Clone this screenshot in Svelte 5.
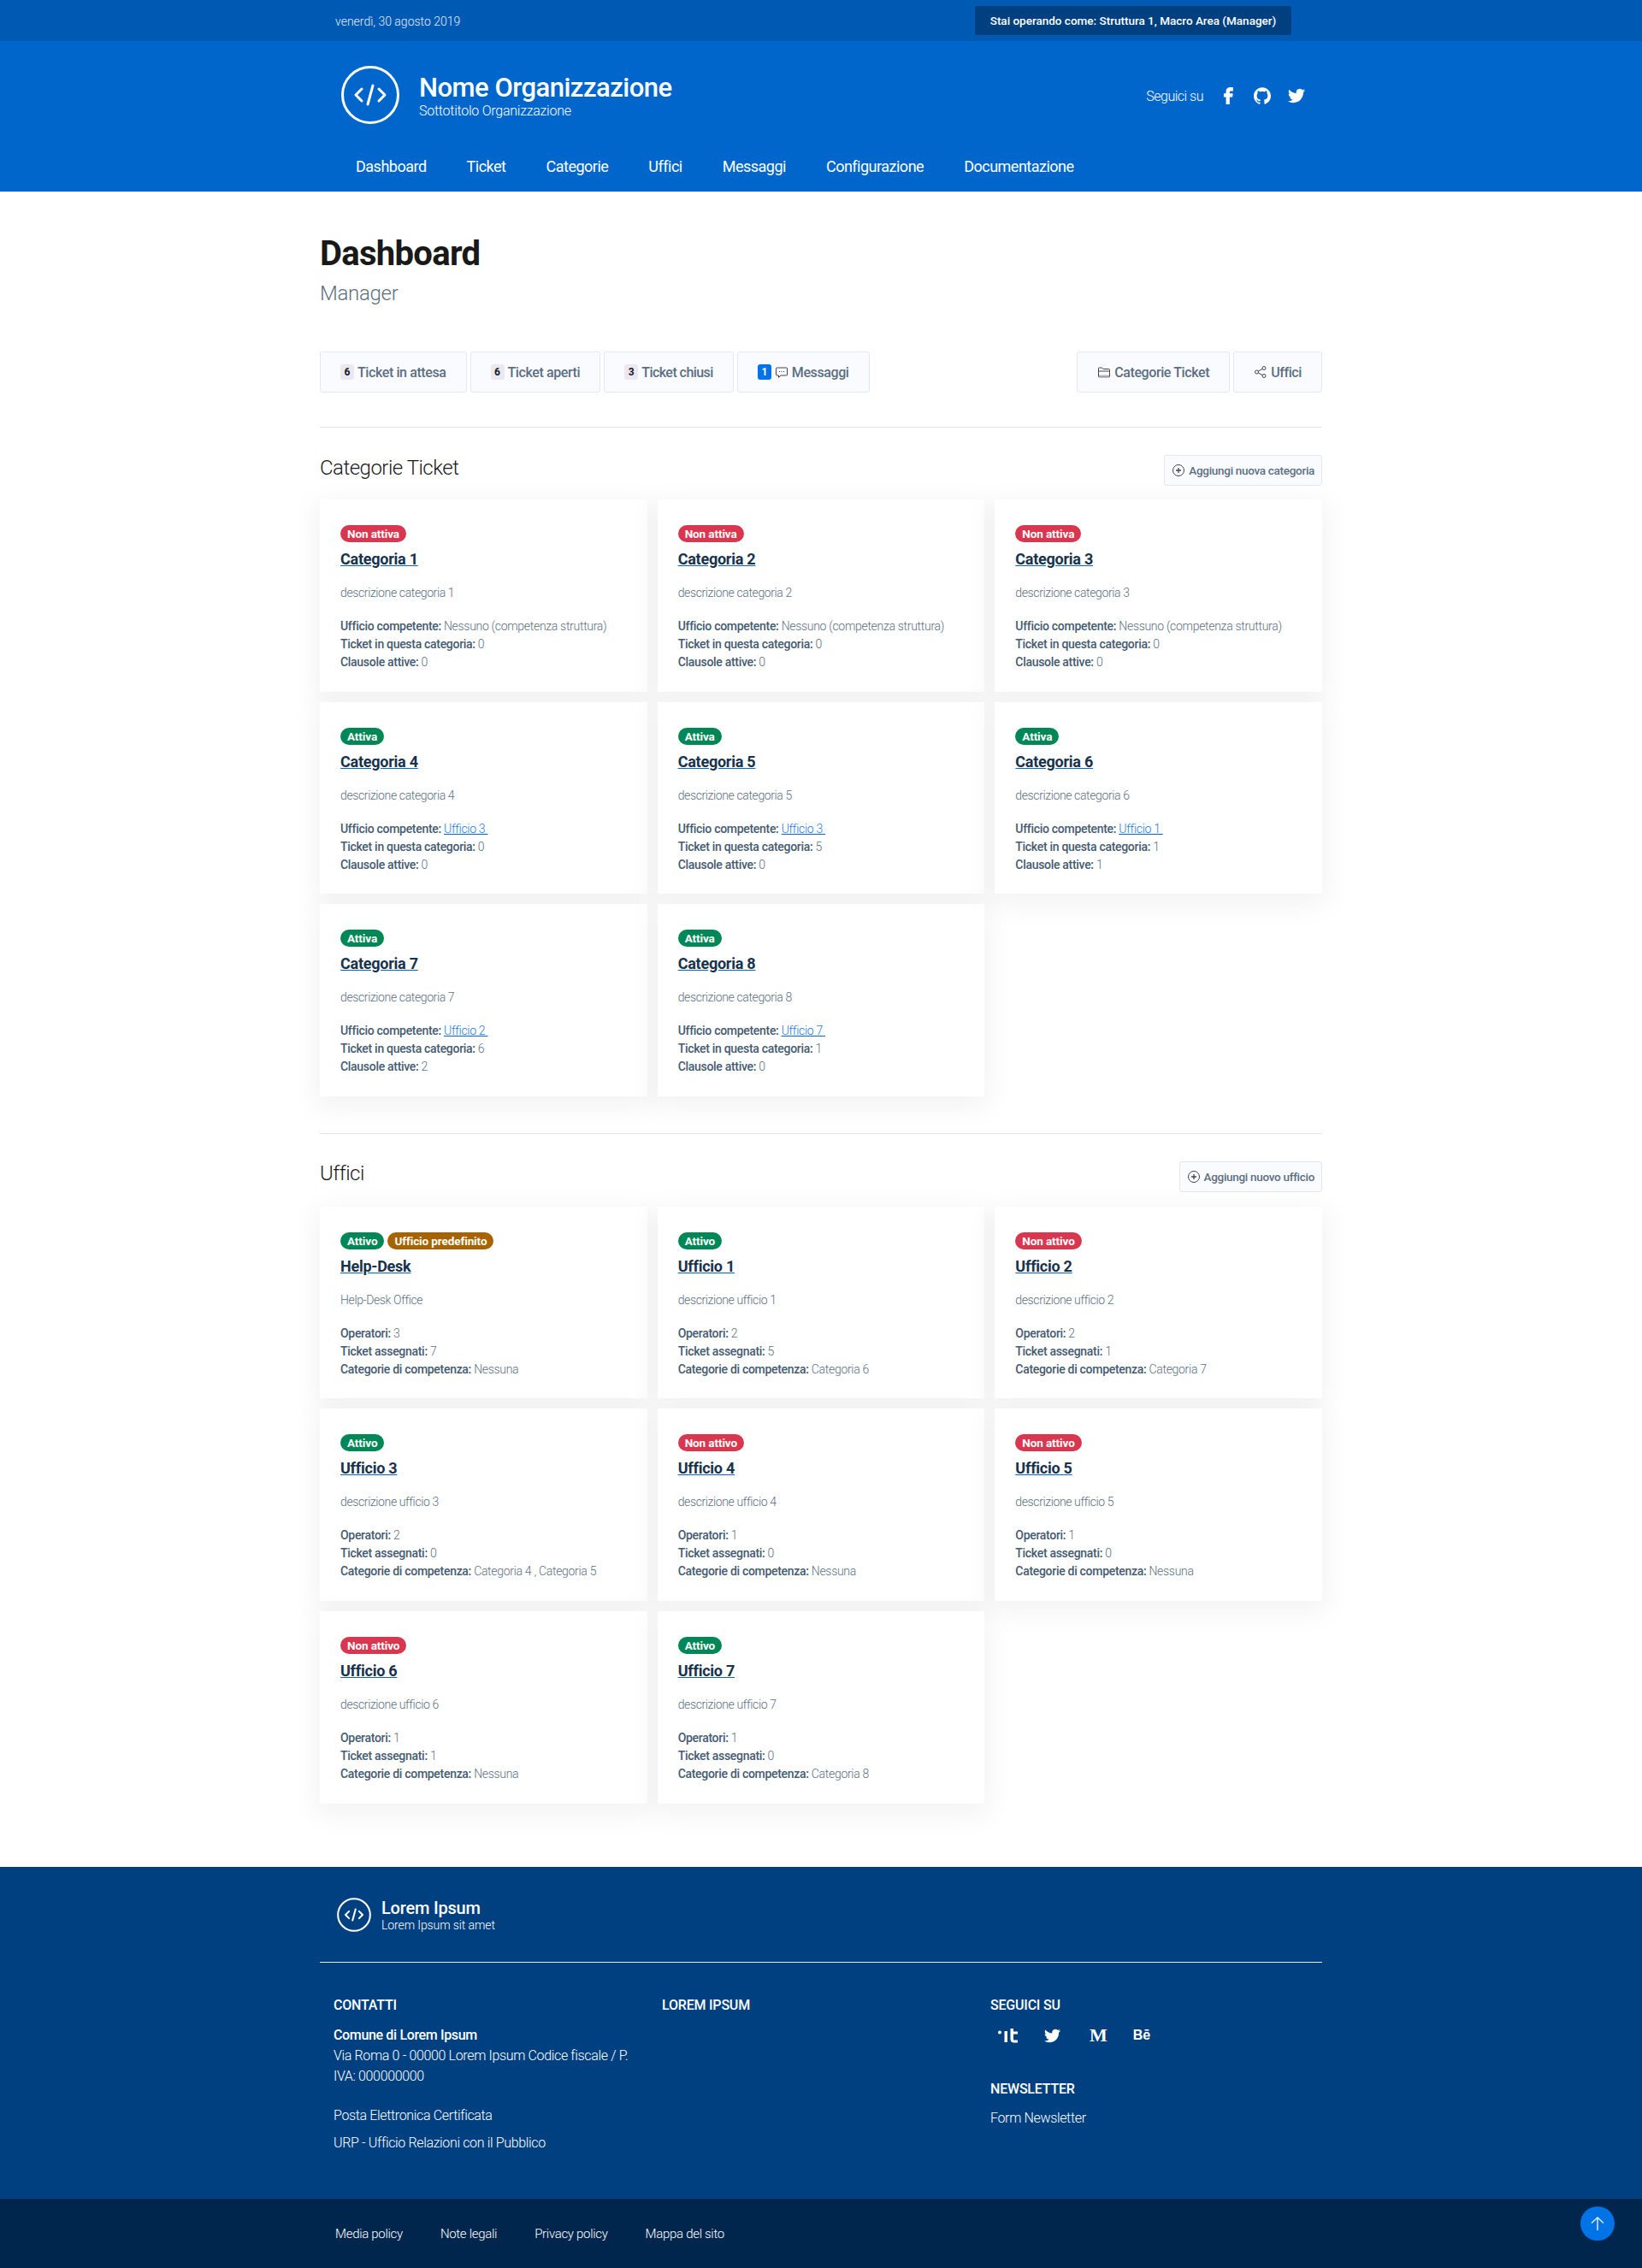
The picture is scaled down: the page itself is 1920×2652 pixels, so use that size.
<script>
	const nav = ['Dashboard', 'Ticket', 'Categorie', 'Uffici', 'Messaggi', 'Configurazione', 'Documentazione']

	const none = 'Nessuno (competenza struttura)'
	const categories = [
		{ n: 1, on: false, office: null, tickets: 0, rules: 0 },
		{ n: 2, on: false, office: null, tickets: 0, rules: 0 },
		{ n: 3, on: false, office: null, tickets: 0, rules: 0 },
		{ n: 4, on: true, office: 'Ufficio 3', tickets: 0, rules: 0 },
		{ n: 5, on: true, office: 'Ufficio 3', tickets: 5, rules: 0 },
		{ n: 6, on: true, office: 'Ufficio 1', tickets: 1, rules: 1 },
		{ n: 7, on: true, office: 'Ufficio 2', tickets: 6, rules: 2 },
		{ n: 8, on: true, office: 'Ufficio 7', tickets: 1, rules: 0 }
	]

	const offices = [
		{ name: 'Help-Desk', desc: 'Help-Desk Office', on: true, main: true, ops: 3, tickets: 7, cats: 'Nessuna' },
		{ name: 'Ufficio 1', desc: 'descrizione ufficio 1', on: true, ops: 2, tickets: 5, cats: 'Categoria 6' },
		{ name: 'Ufficio 2', desc: 'descrizione ufficio 2', on: false, ops: 2, tickets: 1, cats: 'Categoria 7' },
		{ name: 'Ufficio 3', desc: 'descrizione ufficio 3', on: true, ops: 2, tickets: 0, cats: 'Categoria 4 , Categoria 5' },
		{ name: 'Ufficio 4', desc: 'descrizione ufficio 4', on: false, ops: 1, tickets: 0, cats: 'Nessuna' },
		{ name: 'Ufficio 5', desc: 'descrizione ufficio 5', on: false, ops: 1, tickets: 0, cats: 'Nessuna' },
		{ name: 'Ufficio 6', desc: 'descrizione ufficio 6', on: false, ops: 1, tickets: 1, cats: 'Nessuna' },
		{ name: 'Ufficio 7', desc: 'descrizione ufficio 7', on: true, ops: 1, tickets: 0, cats: 'Categoria 8' }
	]

	const twitter = 'M23.953 4.57a10 10 0 01-2.825.775 4.958 4.958 0 002.163-2.723c-.951.555-2.005.959-3.127 1.184a4.92 4.92 0 00-8.384 4.482C7.69 8.095 4.067 6.13 1.64 3.162a4.822 4.822 0 00-.666 2.475c0 1.71.87 3.213 2.188 4.096a4.904 4.904 0 01-2.228-.616v.06a4.923 4.923 0 003.946 4.827 4.996 4.996 0 01-2.212.085 4.936 4.936 0 004.604 3.417 9.867 9.867 0 01-6.102 2.105c-.39 0-.779-.023-1.17-.067a13.995 13.995 0 007.557 2.209c9.053 0 13.998-7.496 13.998-13.985 0-.21 0-.42-.015-.63A9.935 9.935 0 0024 4.59z'
	const github = 'M12 .297c-6.63 0-12 5.373-12 12 0 5.303 3.438 9.8 8.205 11.385.6.113.82-.258.82-.577 0-.285-.01-1.04-.015-2.04-3.338.724-4.042-1.61-4.042-1.61C4.422 18.07 3.633 17.7 3.633 17.7c-1.087-.744.084-.729.084-.729 1.205.084 1.838 1.236 1.838 1.236 1.07 1.835 2.809 1.305 3.495.998.108-.776.417-1.305.76-1.605-2.665-.3-5.466-1.332-5.466-5.93 0-1.31.465-2.38 1.235-3.22-.135-.303-.54-1.523.105-3.176 0 0 1.005-.322 3.3 1.23.96-.267 1.98-.399 3-.405 1.02.006 2.04.138 3 .405 2.28-1.552 3.285-1.23 3.285-1.23.645 1.653.24 2.873.12 3.176.765.84 1.23 1.91 1.23 3.22 0 4.61-2.805 5.625-5.475 5.92.42.36.81 1.096.81 2.22 0 1.606-.015 2.896-.015 3.286 0 .315.21.69.825.57C20.565 22.092 24 17.592 24 12.297c0-6.627-5.373-12-12-12'
	const facebook = 'M15 8h3V3.5h-3.2C11.2 3.500 9.500 5.800 9.500 8.800V11H6.800v4.200h2.700V24h4.400v-8.800h3.300l.7-4.200h-4V9c0-.6.4-1 1.100-1z'
</script>

<div class="page">
	<div class="slim">
		<div class="wrap slim-row">
			<span class="date">venerdì, 30 agosto 2019</span>
			<span class="role">Stai operando come: Struttura 1, Macro Area (Manager)</span>
		</div>
	</div>

	<header class="head">
		<div class="wrap brand-row">
			<div class="brand">
				<svg class="logo" viewBox="0 0 68 68" fill="none" stroke="#fff" stroke-linecap="round" stroke-linejoin="round">
					<circle cx="34" cy="34" r="32.500" stroke-width="3" />
					<path d="M24 27l-7 7 7 7M44 27l7 7-7 7M37 23l-6 22" stroke-width="3" />
				</svg>
				<div class="brand-text">
					<div class="org">Nome Organizzazione</div>
					<div class="sub">Sottotitolo Organizzazione</div>
				</div>
			</div>
			<div class="social">
				<span>Seguici su</span>
				<svg viewBox="2 3.500 20 20.500" fill="#fff" class="soc-ico"><path d={facebook} /></svg>
				<svg viewBox="0 0 24 24" fill="#fff" class="soc-ico"><path d={github} /></svg>
				<svg viewBox="0 0 24 24" fill="#fff" class="soc-ico"><path d={twitter} /></svg>
			</div>
		</div>
		<nav class="wrap nav">
			{#each nav as item}
				<a href="#top">{item}</a>
			{/each}
		</nav>
	</header>

	<main class="wrap">
		<h1>Dashboard</h1>
		<p class="lead">Manager</p>

		<div class="toolbar">
			<div class="btns">
				<button><span class="count">6</span> Ticket in attesa</button>
				<button><span class="count">6</span> Ticket aperti</button>
				<button class="tight"><span class="count">3</span> Ticket chiusi</button>
				<button>
					<span class="count blue">1</span>
					<svg class="ico" viewBox="0 0 16 16" fill="none" stroke="#444" stroke-width="1">
						<path d="M2.500 3h11a1 1 0 011 1v7a1 1 0 01-1 1H7l-2.500 2.500V12h-2a1 1 0 01-1-1V4a1 1 0 011-1z" />
						<path d="M5 7.500h1M7.500 7.500h1M10 7.500h1" stroke-width="1.200" />
					</svg>
					Messaggi
				</button>
			</div>
			<div class="btns">
				<button>
					<svg class="ico" viewBox="0 0 16 16" fill="none" stroke="#444" stroke-width="1">
						<path d="M1.500 13V3.800a.8.8 0 01.8-.8h3.400l1.300 1.500h6.700a.8.8 0 01.8.8V13a.8.8 0 01-.8.8H2.300a.8.8 0 01-.8-.8z" />
						<path d="M1.500 7h13" />
						<path d="M2 11.500h12v2H2z" fill="#bbb" stroke="none" />
					</svg>
					Categorie Ticket
				</button>
				<button>
					<svg class="ico" viewBox="0 0 16 16" fill="none" stroke="#444" stroke-width="1">
						<circle cx="3.500" cy="8" r="2" />
						<circle cx="12" cy="3.500" r="2" />
						<circle cx="12" cy="12.500" r="2" />
						<path d="M5.300 7l4.900-2.600M5.300 9l4.900 2.600" />
					</svg>
					Uffici
				</button>
			</div>
		</div>

		<section class="block">
			<div class="block-head">
				<h2>Categorie Ticket</h2>
				<button class="small">
					<svg class="ico" viewBox="0 0 16 16" fill="none" stroke="#444" stroke-width="1">
						<circle cx="8" cy="8" r="6.500" />
						<path d="M8 5v6M5 8h6" stroke-width="1.300" />
					</svg>
					Aggiungi nuova categoria
				</button>
			</div>
			<div class="grid">
				{#each categories as c}
					<article class="card">
						<div class="tags">
							<span class="tag" class:green={c.on}>{c.on ? 'Attiva' : 'Non attiva'}</span>
						</div>
						<a class="title" href="#top">Categoria {c.n}</a>
						<p class="desc">descrizione categoria {c.n}</p>
						<div class="facts">
							<div>
								<b>Ufficio competente:</b>
								{#if c.office}<a class="link" href="#top">{c.office}&nbsp;</a>{:else}{none}{/if}
							</div>
							<div><b>Ticket in questa categoria:</b> {c.tickets}</div>
							<div><b>Clausole attive:</b> {c.rules}</div>
						</div>
					</article>
				{/each}
			</div>
		</section>

		<section class="block second">
			<div class="block-head">
				<h2>Uffici</h2>
				<button class="small">
					<svg class="ico" viewBox="0 0 16 16" fill="none" stroke="#444" stroke-width="1">
						<circle cx="8" cy="8" r="6.500" />
						<path d="M8 5v6M5 8h6" stroke-width="1.300" />
					</svg>
					Aggiungi nuovo ufficio
				</button>
			</div>
			<div class="grid">
				{#each offices as o}
					<article class="card">
						<div class="tags">
							<span class="tag" class:green={o.on}>{o.on ? 'Attivo' : 'Non attivo'}</span>
							{#if o.main}<span class="tag amber">Ufficio predefinito</span>{/if}
						</div>
						<a class="title" href="#top">{o.name}</a>
						<p class="desc">{o.desc}</p>
						<div class="facts">
							<div><b>Operatori:</b> {o.ops}</div>
							<div><b>Ticket assegnati:</b> {o.tickets}</div>
							<div><b>Categorie di competenza:</b> {o.cats}</div>
						</div>
					</article>
				{/each}
			</div>
		</section>
	</main>

	<footer class="foot">
		<div class="wrap">
			<div class="foot-brand">
				<svg class="foot-logo" viewBox="0 0 68 68" fill="none" stroke="#fff" stroke-linecap="round" stroke-linejoin="round">
					<circle cx="34" cy="34" r="32" stroke-width="3.500" />
					<path d="M24 27l-7 7 7 7M44 27l7 7-7 7M37 23l-6 22" stroke-width="3.500" />
				</svg>
				<div>
					<div class="foot-org">Lorem Ipsum</div>
					<div class="foot-sub">Lorem Ipsum sit amet</div>
				</div>
			</div>
			<div class="foot-cols">
				<div class="col">
					<h4>CONTATTI</h4>
					<p class="addr">
						<b>Comune di Lorem Ipsum</b><br />
						Via Roma 0 - 00000 Lorem Ipsum Codice fiscale / P. IVA: 000000000
					</p>
					<a class="foot-link first" href="#top">Posta Elettronica Certificata</a>
					<a class="foot-link" href="#top">URP - Ufficio Relazioni con il Pubblico</a>
				</div>
				<div class="col">
					<h4>LOREM IPSUM</h4>
				</div>
				<div class="col">
					<h4>SEGUICI SU</h4>
					<div class="foot-social">
						<svg class="it" viewBox="0 0 24 18" fill="#fff">
							<circle cx="2" cy="5.500" r="2" />
							<rect x="7.500" y="4" width="3.500" height="13" />
							<path d="M14.500 1h3.500v3.500h5v3h-5v6c0 .6.4 1 1 1h4V17.500h-5a4 4 0 01-3.500-4z" />
						</svg>
						<svg class="tw" viewBox="0 0 24 24" fill="#fff"><path d={twitter} /></svg>
						<span class="medium">M</span>
						<span class="behance">Bē</span>
					</div>
					<h4 class="news">NEWSLETTER</h4>
					<a class="foot-link news-link" href="#top">Form Newsletter</a>
				</div>
			</div>
		</div>
	</footer>

	<div class="bottom">
		<div class="wrap bottom-row">
			<a href="#top">Media policy</a>
			<a href="#top">Note legali</a>
			<a href="#top">Privacy policy</a>
			<a href="#top">Mappa del sito</a>
		</div>
	</div>

	<a class="totop" href="#top" aria-label="torna su">
		<svg viewBox="0 0 20 20" fill="none" stroke="#dbe9fb" stroke-width="1.500"><path d="M10 18V3M3 9.500L10 3l7 6.500" /></svg>
	</a>
</div>

<style>
	:global(body) {
		margin: 0;
		background: #fff;
		font-family: Roboto, "Liberation Sans", sans-serif;
		color: #17324d;
	}
	.page {
		position: relative;
		height: 2652px;
		overflow: hidden;
	}
	.wrap {
		width: 1172px;
		margin: 0 auto;
	}
	a {
		color: inherit;
		text-decoration: none;
	}

	/* top strip */
	.slim {
		height: 48px;
		background: #0059b3;
		color: #e2edf8;
	}
	.slim-row {
		display: flex;
		align-items: center;
		height: 48px;
	}
	.date {
		margin-left: 18px;
		padding-top: 2px;
		font-size: 14px;
		font-weight: 300;
	}
	.role {
		margin-left: auto;
		margin-right: 36px;
		width: 370px;
		height: 34px;
		line-height: 34px;
		text-align: center;
		background: #004080;
		border-radius: 3px;
		font-size: 13.500px;
		font-weight: 500;
		color: #fff;
	}

	/* header */
	.head {
		height: 176px;
		background: #0066cc;
		color: #fff;
	}
	.brand-row {
		display: flex;
		align-items: center;
		justify-content: space-between;
		height: 126px;
	}
	.brand {
		display: flex;
		align-items: center;
		gap: 23px;
		margin-left: 25px;
	}
	.brand-text {
		padding-top: 2px;
	}
	.logo {
		width: 68px;
		height: 68px;
	}
	.org {
		font-size: 31px;
		line-height: 36px;
		font-weight: 500;
		letter-spacing: -0.5px;
	}
	.sub {
		font-size: 16px;
		line-height: 18px;
		font-weight: 300;
		letter-spacing: -0.25px;
	}
	.social {
		display: flex;
		align-items: center;
		gap: 20px;
		margin-right: 20px;
		padding-top: 2px;
		font-size: 16px;
		font-weight: 300;
		letter-spacing: -0.5px;
	}
	.social span {
		margin-right: -1px;
	}
	.soc-ico {
		width: 20px;
		height: 20px;
	}
	.nav {
		display: flex;
		gap: 47px;
		padding-left: 42px;
		box-sizing: border-box;
		font-size: 18px;
		font-weight: 400;
		line-height: 24px;
		margin-top: 9px;
		letter-spacing: -0.5px;
	}

	/* page head */
	main {
		display: block;
	}
	h1 {
		margin: 0;
		padding-top: 46px;
		font-size: 40px;
		line-height: 54px;
		font-weight: 700;
		color: #19191a;
		letter-spacing: -0.7px;
	}
	.lead {
		margin: 0;
		padding-top: 3px;
		font-size: 24px;
		line-height: 32px;
		font-weight: 300;
		color: #5c6f82;
		letter-spacing: -0.3px;
	}
	.toolbar {
		display: flex;
		justify-content: space-between;
		margin-top: 52px;
		padding-bottom: 40px;
		border-bottom: 1px solid #e3e4e8;
	}
	.btns {
		display: flex;
		gap: 4px;
	}
	button {
		display: flex;
		align-items: center;
		gap: 4px;
		height: 48px;
		padding: 0 23px;
		border: 1px solid #e3e7f1;
		border-radius: 3px;
		background: #fafbff;
		color: #5c6f82;
		font-family: inherit;
		font-size: 16px;
		font-weight: 500;
		letter-spacing: -0.4px;
	}
	button.tight {
		letter-spacing: -0.55px;
	}
	button.small {
		height: 36px;
		padding: 0 8px;
		font-size: 13.500px;
		letter-spacing: -0.3px;
	}
	.count {
		display: inline-block;
		min-width: 16px;
		height: 18px;
		line-height: 18px;
		border-radius: 3px;
		background: #ebe8f3;
		color: #19191a;
		font-size: 12px;
		font-weight: 700;
		text-align: center;
		letter-spacing: 0;
	}
	.count.blue {
		background: #0073e6;
		color: #fff;
	}
	.ico {
		width: 16px;
		height: 16px;
	}

	/* sections */
	.block-head {
		display: flex;
		align-items: center;
		justify-content: space-between;
		height: 36px;
		padding: 32px 0 16px;
	}
	h2 {
		margin: -7px 0 0;
		font-size: 24px;
		font-weight: 300;
		color: #19191a;
		letter-spacing: -0.5px;
	}
	.second {
		margin-top: 43px;
		border-top: 1px solid #e3e4e8;
	}
	.second .block-head {
		padding-bottom: 17px;
	}
	.grid {
		display: grid;
		grid-template-columns: repeat(3, 1fr);
		gap: 12px;
	}
	.card {
		box-sizing: border-box;
		padding: 30px 24px 23.600px;
		background: #fff;
		box-shadow: 0 8px 30px 5px rgba(0, 0, 0, 0.05);
	}
	.tags {
		display: flex;
		gap: 4px;
		height: 20px;
	}
	.tag {
		padding: 0 8px;
		height: 20px;
		line-height: 20px;
		border-radius: 10px;
		background: #d9364f;
		color: #fff;
		font-size: 13.500px;
		font-weight: 700;
		letter-spacing: -0.1px;
	}
	.tag.green {
		background: #008758;
	}
	.tag.amber {
		background: #a66300;
	}
	.title {
		display: inline-block;
		margin-top: 6px;
		font-size: 18px;
		line-height: 28px;
		font-weight: 700;
		color: #17324d;
		text-decoration: underline;
		text-decoration-color: #0066cc;
		letter-spacing: -0.25px;
	}
	.desc {
		margin: 14px 0 0;
		font-size: 14px;
		line-height: 22px;
		font-weight: 300;
		color: #5c6f82;
		letter-spacing: -0.38px;
	}
	.facts {
		margin-top: 18px;
		font-size: 14px;
		line-height: 21px;
		font-weight: 300;
		color: #5c6f82;
		letter-spacing: -0.3px;
	}
	.facts b {
		font-weight: 500;
		color: #455b71;
	}
	.link {
		color: #1a7ae0;
		text-decoration: underline;
		text-decoration-color: #0066cc;
	}

	/* footer */
	.foot {
		position: absolute;
		top: 2183px;
		left: 0;
		right: 0;
		height: 388px;
		background: #004080;
		color: #fff;
	}
	.foot-brand {
		display: flex;
		align-items: center;
		gap: 12px;
		height: 112px;
		padding-left: 20px;
		box-sizing: border-box;
		border-bottom: 1px solid #e5ecf4;
	}
	.foot-logo {
		width: 40px;
		height: 40px;
	}
	.foot-org {
		font-size: 20px;
		line-height: 24px;
		font-weight: 500;
		letter-spacing: -0.2px;
	}
	.foot-sub {
		font-size: 14px;
		line-height: 16px;
		font-weight: 300;
		letter-spacing: -0.1px;
	}
	.foot-cols {
		display: grid;
		grid-template-columns: repeat(3, 352px);
		padding: 38px 0 0 16px;
		column-gap: 32px;
	}
	h4 {
		margin: 0;
		font-size: 16px;
		line-height: 24px;
		font-weight: 500;
		letter-spacing: -0.2px;
	}
	.addr {
		margin: 11px 0 0;
		font-size: 16px;
		line-height: 24px;
		font-weight: 300;
		color: #fff;
		letter-spacing: -0.35px;
	}
	.addr b {
		font-weight: 500;
	}
	.foot-link {
		display: block;
		margin-top: 8px;
		font-size: 16px;
		line-height: 24px;
		font-weight: 300;
		color: #fff;
		letter-spacing: -0.35px;
	}
	.foot-link.first {
		margin-top: 22px;
	}
	.foot-link.news-link {
		margin-top: 10px;
	}
	.foot-social {
		display: flex;
		align-items: center;
		height: 24px;
		margin-top: 11px;
	}
	.it {
		width: 24px;
		height: 18px;
		margin-left: 9px;
	}
	.tw {
		width: 19px;
		height: 19px;
		margin-left: 30px;
	}
	.medium {
		margin-left: 34px;
		font-family: "Liberation Serif", serif;
		font-size: 22px;
		font-weight: 700;
	}
	.behance {
		margin-left: 30px;
		font-family: "Liberation Sans", sans-serif;
		font-size: 16px;
		font-weight: 700;
	}
	.news {
		margin-top: 39px;
	}
	.bottom {
		position: absolute;
		top: 2571px;
		left: 0;
		right: 0;
		height: 81px;
		background: #00264d;
		color: #fff;
	}
	.bottom-row {
		display: flex;
		align-items: center;
		gap: 44px;
		height: 81px;
		padding-left: 18px;
		box-sizing: border-box;
		font-size: 15px;
		font-weight: 300;
		letter-spacing: -0.3px;
	}
	.totop {
		position: absolute;
		left: 1848px;
		top: 2580px;
		width: 40px;
		height: 40px;
		border-radius: 50%;
		background: #0073e6;
		display: flex;
		align-items: center;
		justify-content: center;
	}
	.totop svg {
		width: 20px;
		height: 20px;
	}
</style>
